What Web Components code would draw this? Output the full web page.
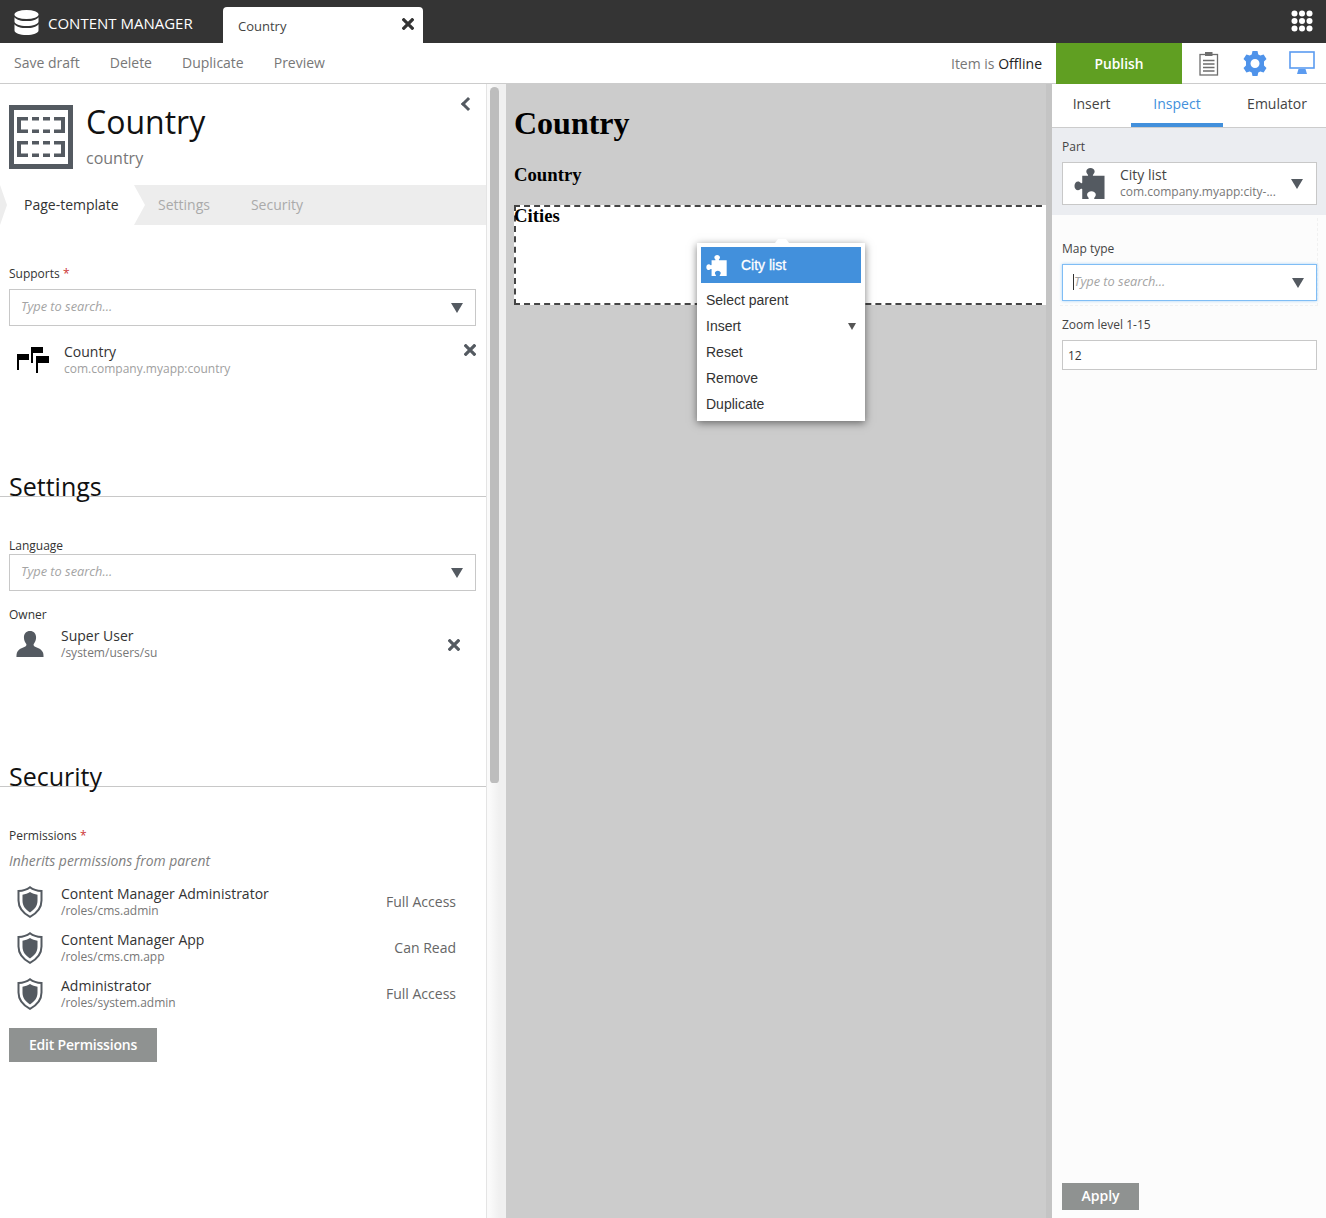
<!DOCTYPE html>
<html lang="en"><head><meta charset="utf-8"><title>Content Manager</title>
<style>
html,body{margin:0;padding:0;height:1218px;overflow:hidden;background:#fff;font-family:"Open Sans",sans-serif;}
</style></head><body>
<cm-app></cm-app>
<script>
const ICONS={
 db:'<svg width="25" height="25" viewBox="0 0 25 25"><ellipse cx="12.5" cy="4.5" rx="12" ry="4.5" fill="#fff"/><path d="M.5 7.2c2 3 7 3.8 12 3.8s10-.8 12-3.800v4.300c0 2.600-5.400 4.500-12 4.500S.5 14.100.5 11.500z" fill="#fff"/><path d="M.5 14.200c2 3 7 3.800 12 3.800s10-.8 12-3.800v6.300c0 2.600-5.400 4.500-12 4.500S.5 23.100.5 20.500z" fill="#fff"/></svg>',
 grid:'<svg width="22" height="22" viewBox="0 0 22 22" fill="#fff"><circle cx="3.500" cy="3.500" r="3"/><circle cx="11" cy="3.500" r="3"/><circle cx="18.500" cy="3.500" r="3"/><circle cx="3.500" cy="11" r="3"/><circle cx="11" cy="11" r="3"/><circle cx="18.500" cy="11" r="3"/><circle cx="3.500" cy="18.500" r="3"/><circle cx="11" cy="18.500" r="3"/><circle cx="18.500" cy="18.500" r="3"/></svg>',
 x:c=>`<svg width="12" height="12" viewBox="0 0 12 12" style="display:block"><path d="M1.800 1.800l8.400 8.400M10.200 1.800l-8.400 8.400" stroke="${c}" stroke-width="3.200" stroke-linecap="square" fill="none"/></svg>`,
 clip:'<svg width="20" height="25" viewBox="0 0 20 25" fill="none" stroke="#6e6e6e"><rect x="1" y="3.500" width="17.500" height="20.500" stroke-width="1.300"/><rect x="6" y="1" width="7.500" height="4" fill="#6e6e6e" stroke="none"/><path d="M4 9.500h11.500M4 13h11.500M4 16.500h11.500M4 20h11.500" stroke-width="1.300"/></svg>',
 gear:'<svg width="24" height="25" viewBox="0 0 24 25"><path fill="#4f93ea" fill-rule="evenodd" d="M9.500 0h5l.8 3.400 2 1.100 3.300-1L23.500 8l-2.500 2.400v4.200l2.500 2.400-2.900 4.500-3.300-1-2 1.100-.8 3.400h-5l-.8-3.400-2-1.100-3.300 1L.5 17 3 14.600v-4.200L.5 8l2.900-4.500 3.300 1 2-1.100zM12 8a4.500 4.500 0 1 0 0 9 4.500 4.500 0 0 0 0-9z"/></svg>',
 mon:'<svg width="26" height="24" viewBox="0 0 26 24"><rect x="1" y="1" width="24" height="16" fill="none" stroke="#5b9bf0" stroke-width="1.600"/><path d="M9.500 18h7l1.500 5H8z" fill="#5b9bf0"/></svg>',
 page:'<svg width="64" height="64" viewBox="0 0 64 64" fill="#545a61"><path fill-rule="evenodd" d="M0 0h64v64H0zM5 5v54h54V5z"/><path d="M8 12h11v3.500h-7v9h7V28H8zM23 12h7v3.500h-7zM34 12h7v3.500h-7zM45 12h11v16H45v-3.500h7v-9h-7zM23 24.500h7V28h-7zM34 24.500h7V28h-7zM8 36h11v3.500h-7v9h7V52H8zM23 36h7v3.500h-7zM34 36h7v3.500h-7zM45 36h11v16H45v-3.500h7v-9h-7zM23 48.500h7V52h-7zM34 48.500h7V52h-7z"/></svg>',
 flags:'<svg width="32" height="26" viewBox="0 0 32 26" fill="#000"><rect x="0" y="7" width="2" height="16"/><rect x="0" y="7" width="12" height="6"/><rect x="14" y="0" width="2" height="16"/><rect x="14" y="0" width="12" height="6"/><rect x="19" y="9" width="2" height="17"/><rect x="19" y="9" width="13" height="7"/></svg>',
 user:'<svg width="28" height="26" viewBox="0 0 30 30" preserveAspectRatio="none" fill="#545a61"><path d="M15 0c4 0 6.500 3 6.500 7.500 0 3-1 5.500-2.500 7.500-.5 1 0 2.500 1.500 3.200 3 1.300 7 2.800 8.500 6.800.4 1.300.5 3.500.5 5H.5c0-1.500.1-3.700.5-5 1.500-4 5.500-5.500 8.500-6.800 1.500-.7 2-2.200 1.500-3.200-1.500-2-2.500-4.500-2.500-7.500C8.500 3 11 0 15 0z"/></svg>',
 shield:'<svg width="26" height="32" viewBox="0 0 26 32"><path d="M13 1.200c3 2.300 7 3.600 11.500 3.800v9.500c0 7.500-4.800 12.800-11.500 16.300C6.300 27.300 1.500 22 1.500 14.500V5C6 4.800 10 3.500 13 1.200z" fill="none" stroke="#545a61" stroke-width="2"/><path d="M13 6c2.300 1.500 4.800 2.400 7.500 2.700v6c0 5-3 8.800-7.500 11.700-4.500-2.900-7.500-6.700-7.500-11.700v-6C8.200 8.400 10.700 7.500 13 6z" fill="#545a61"/></svg>',
 puzzle:c=>`<svg width="31" height="31" viewBox="0 0 31 32" fill="${c}"><path d="M8 8h5.500c.6 0 .7-.6.300-1.100C12.800 5.800 12.200 5 12.200 3.700 12.200 1.500 14.200 0 16.500 0s4.300 1.500 4.300 3.700c0 1.300-.6 2.100-1.600 3.200-.4.500-.3 1.100.3 1.100H31v24H21c-.7 0-.9-.7-.5-1.300.8-1.100 1.500-1.900 1.500-3.100 0-2-2.200-3.600-4.500-3.600S13 25.600 13 27.600c0 1.200.7 2 1.500 3.100.4.600.2 1.300-.5 1.300H8V22c0-.7-.7-.9-1.300-.5-1 .8-1.800 1.500-3 1.500C1.600 23 0 21 0 18.500S1.600 14 3.700 14c1.200 0 2 .7 3 1.500.6.400 1.300.2 1.300-.5z"/></svg>`
};
function def(name,css,html,init){
 customElements.define(name,class extends HTMLElement{
  constructor(){super();const s=this.attachShadow({mode:'open'});s.innerHTML='<style>'+css+'</style>'+(typeof html==='function'?html(this):html);}
  connectedCallback(){if(this._d)return;this._d=1;if(init)init(this);}
 });
}
def('top-bar',`:host{display:flex;height:43px;background:#343434;align-items:stretch;color:#fff}
.logo{display:flex;align-items:center;padding-left:14px;width:223px;box-sizing:border-box;gap:9px;font-size:15px}
.logo svg{display:block;margin-top:1px}.logo span{padding-top:3px}
.tab{width:200px;margin-top:7px;background:#fff;border-radius:4px 4px 0 0;color:#444;font-size:13px;display:flex;align-items:center;justify-content:space-between;padding:0 9px 0 15px;box-sizing:border-box}
.tab span{padding-top:1px}.tab svg{margin-bottom:3px}
.grid{margin-left:auto;padding:10px 13px 0 0}`,
`<div class="logo">${ICONS.db}<span>CONTENT MANAGER</span></div><div class="tab"><span>Country</span>${ICONS.x('#333')}</div><div class="grid">${ICONS.grid}</div>`);

def('tool-bar',`:host{display:flex;height:41px;box-sizing:border-box;border-bottom:1px solid #ccc;align-items:stretch;font-size:14px;color:#777}
.l{display:flex;gap:30px;padding-left:14px;align-items:center;padding-bottom:2px}
.st{margin-left:auto;align-self:center;padding-right:14px;padding-top:1px;color:#777}.st b{font-weight:400;color:#222}
.pub{width:126px;background:#609f22;color:#fff;font-weight:600;font-size:13.800px;display:flex;align-items:center;justify-content:center;height:41px}
.ic{display:flex;align-items:center;width:144px;box-sizing:border-box;padding-left:17px}
.ic svg{display:block}.ic svg:nth-child(2){margin-left:24px}.ic svg:nth-child(3){margin-left:22px}`,
`<div class="l"><span>Save draft</span><span>Delete</span><span>Duplicate</span><span>Preview</span></div><div class="st">Item is <b>Offline</b></div><div class="pub">Publish</div><div class="ic">${ICONS.clip}${ICONS.gear}${ICONS.mon}</div>`);

def('search-box',`:host{display:flex;align-items:center;box-sizing:border-box;height:37px;border:1px solid #c8c8c8;background:#fff;padding:0 12px 0 11px;justify-content:space-between}
:host([focus]){border-color:#7fbdf5;box-shadow:0 0 3px #a8d3f8;padding-left:10px}
.p{font-style:italic;color:#a4a4a4;font-size:12.800px;padding-bottom:4px}
.c{display:none;width:1px;height:16px;background:#333;margin-bottom:2px}
:host([focus]) .c{display:block}.w{display:flex;align-items:center}
.t{width:0;height:0;border-left:6px solid transparent;border-right:6px solid transparent;border-top:10px solid #545a61}`,
`<div class="w"><i class="c"></i><span class="p">Type to search...</span></div><i class="t"></i>`);

def('field-label',`:host{display:block;font-size:12px;line-height:16px;color:#333}.r{color:#c33}`,
 h=>`<slot></slot>${h.hasAttribute('req')?' <span class="r">*</span>':''}`);

def('section-head',`:host{display:block;height:27px;line-height:34px;font-size:25px;color:#111;border-bottom:1px solid #c8c8c8;padding-left:9px}`,`<slot></slot>`);

def('entity-row',`:host{display:flex;height:46px;align-items:center;position:relative}
.i{width:var(--iw,61px);display:flex;padding-left:var(--ip,17px);box-sizing:border-box;flex:none}
.t{flex:1;min-width:0}
.n{font-size:14px;line-height:17px;color:#333}.p{font-size:12px;line-height:16px;color:#777;margin-top:1px}
:host([soft]) .p{color:#a0a0a0}
.a{font-size:14px;color:#666;padding:0 20px 2px 0}`,
h=>`<div class="i"><slot name="icon"></slot></div><div class="t"><div class="n">${h.getAttribute('name')}</div><div class="p">${h.getAttribute('path')}</div></div>${h.getAttribute('access')?`<div class="a">${h.getAttribute('access')}</div>`:''}<slot name="act"></slot>`);

def('step-bar',`:host{display:flex;height:40px;background:#ededed;font-size:14px;color:#aaa;align-items:center;position:relative}
.on{position:relative;height:40px;width:145px;background:#fff;clip-path:polygon(0 0,134px 0,145px 50%,134px 100%,0 100%,7px 50%);color:#333;display:flex;align-items:center;padding:0 0 2px 24px;box-sizing:border-box;flex:none}
.s{margin-left:13px;padding-bottom:2px}.s+.s{margin-left:41px}`,
`<div class="on">Page-template</div><span class="s">Settings</span><span class="s">Security</span>`);

def('wizard-panel',`:host{display:block;width:487px;flex:none;box-sizing:border-box;border-right:1px solid #e4e4e4;height:1134px;overflow:hidden;position:relative}
.hd{display:flex;padding:21px 0 16px 9px;height:64px;position:relative}
.hd svg{display:block}.tt{margin-left:13px}
.h1{font-size:32px;line-height:38px;color:#111;margin-top:-2px}.h2{font-size:16px;line-height:22px;color:#777;margin-top:6px}
.col{position:absolute;right:13px;top:15px}
.col i{display:block;width:7px;height:7px;border-left:3px solid #545a61;border-bottom:3px solid #545a61;transform:rotate(45deg)}
.f{padding:0 10px 0 9px}
.sup{padding-top:41px;height:244px;box-sizing:border-box}
.sup search-box{margin-top:7px}
.sup entity-row{margin:11px 0 0 -9px;--iw:64px}
.rm{position:absolute;right:0;top:7px}.rm2{position:absolute;right:16px;top:14px}
.set{height:262px;box-sizing:border-box;padding-top:41px}
.own{margin-top:16px}
.own field-label{margin-bottom:2px}
.own entity-row{margin:0 0 0 -9px;height:38px;--ip:16px}
.sec{padding-top:41px}
.inh{font-size:13.900px;font-style:italic;color:#808080;margin:8px 0 9px;line-height:18px}
.sec entity-row{margin-left:-9px}
.btn{display:inline-block;margin-top:11px;background:#8f9291;color:#fff;font-size:14px;font-weight:600;line-height:34px;width:148px;text-align:center;letter-spacing:-.2px}
.rows{margin-top:1px}`,
`<div class="hd">${ICONS.page}<div class="tt"><div class="h1">Country</div><div class="h2">country</div></div><div class="col"><i></i></div></div>
<step-bar></step-bar>
<div class="f sup"><field-label req>Supports</field-label><search-box></search-box>
 <entity-row soft id="c" name="Country" path="com.company.myapp:country"><span slot="act" class="rm">${ICONS.x('#545a61')}</span></entity-row></div>
<section-head>Settings</section-head>
<div class="f set"><field-label>Language</field-label><search-box></search-box>
 <div class="own"><field-label>Owner</field-label><entity-row id="u" name="Super User" path="/system/users/su"><span slot="act" class="rm2">${ICONS.x('#545a61')}</span></entity-row></div></div>
<section-head>Security</section-head>
<div class="f sec"><field-label req>Permissions</field-label><div class="inh">Inherits permissions from parent</div>
 <div class="rows"><entity-row name="Content Manager Administrator" path="/roles/cms.admin" access="Full Access"></entity-row>
 <entity-row name="Content Manager App" path="/roles/cms.cm.app" access="Can Read"></entity-row>
 <entity-row name="Administrator" path="/roles/system.admin" access="Full Access"></entity-row></div>
 <div class="btn">Edit Permissions</div></div>`,
h=>{const s=h.shadowRoot;
 const put=(r,ic)=>{const sp=document.createElement('span');sp.slot='icon';sp.style.display='flex';sp.innerHTML=ic;r.appendChild(sp);};
 put(s.getElementById('c'),ICONS.flags);put(s.getElementById('u'),ICONS.user);
 s.querySelectorAll('.rows entity-row').forEach(r=>put(r,ICONS.shield));
});

def('scroll-rail',`:host{display:block;width:19px;flex:none;background:linear-gradient(90deg,#fafafa 0 3px,#f0f0f0 12px);box-sizing:border-box;padding:3px 7px 0 3px}
i{display:block;height:696px;width:9px;background:#bdbdbd;border-radius:5px 5px 4px 4px}`,`<i></i>`);

def('context-menu',`:host{display:block;position:absolute;left:191px;top:159px;width:168px;height:178px;background:#fff;box-shadow:0 2px 8px rgba(0,0,0,.5);font-family:"Liberation Sans",Arial,sans-serif;font-size:14px;color:#333;box-sizing:border-box;padding:4px}
.ar{position:absolute;left:78px;top:-4px;width:14px;height:4px;background:#fff;clip-path:polygon(3px 0,11px 0,14px 100%,0 100%)}
.h{height:36px;background:#4290dc;color:#fff;display:flex;align-items:center;font-weight:400;-webkit-text-stroke:.3px #fff}
.h svg{margin:0 14px 0 5px;display:block}
.it{height:26px;line-height:26px;padding-left:5px;position:relative}
.l{margin-top:4px}
.t{position:absolute;right:5px;top:10px;width:0;height:0;border-left:4px solid transparent;border-right:4px solid transparent;border-top:7px solid #555}`,
`<div class="ar"></div><div class="h">${ICONS.puzzle('#fff').replace('width="31" height="31"','width="21" height="21"')}City list</div><div class="l"><div class="it">Select parent</div><div class="it">Insert<i class="t"></i></div><div class="it">Reset</div><div class="it">Remove</div><div class="it">Duplicate</div></div>`);

def('live-canvas',`:host{display:block;flex:1;min-width:0;height:1134px;background:#ccc;position:relative;overflow:hidden;padding:8px;box-sizing:border-box;font-family:"Liberation Serif","Times New Roman",serif;color:#000}
h1{font-size:32px;line-height:37px;margin:13px 0 0;font-weight:700}
h3{font-size:18.720px;line-height:22px;margin:0;font-weight:700}
.c1{margin-top:22px}
.reg{margin:19px -14px 0 0;height:100px;box-sizing:border-box;border:2px dashed #444;background:#fff}
.reg h3{margin:-2px 0 0 -2px}`,
`<h1>Country</h1><h3 class="c1">Country</h3><div class="reg"><h3>Cities</h3></div><context-menu></context-menu>`);

def('inspect-panel',`:host{display:flex;flex-direction:column;width:280px;flex:none;height:1134px;box-sizing:border-box;border-left:6px solid #c4c4c4;background:#fcfcfc;color:#444;position:relative}
.tabs{display:flex;height:44px;box-sizing:border-box;border-bottom:1px solid #ccc;background:#fff;font-size:14px;color:#444}
.tabs span{display:flex;align-items:center;justify-content:center;height:43px;box-sizing:border-box;padding-bottom:5px}
.tabs .a{color:#4290dc;border-bottom:4px solid #4290dc;padding-bottom:0}
.tabs .e{padding-left:5px}
.part{background:#ebedf1;height:87px;padding:11px 9px 0 10px;box-sizing:border-box}
.lb{font-size:12px;line-height:16px;color:#444}
.cb{height:43px;margin-top:7px;border:1px solid #c8c8c8;background:#fff;box-sizing:border-box;display:flex;align-items:center;padding-left:11px}
.cb svg{display:block;flex:none}.cb .tx{margin-left:15px;flex:1;padding-bottom:1px}
.n{font-size:14px;line-height:16px;color:#444;margin-bottom:1px}.p{font-size:12px;line-height:16px;color:#777}
.t{width:0;height:0;border-left:6px solid transparent;border-right:6px solid transparent;border-top:10px solid #545a61;margin-right:13px}
.body{padding:3px 9px 0 10px;flex:1;display:flex;flex-direction:column}
.dash{margin:0 -1px 0 -2px;padding:23px 0 4px 2px;border:1px dashed #f1f1f1;border-width:0 1px 1px 0}
search-box{margin-top:7px}
.z{margin-top:11px}
.inp{height:30px;margin-top:7px;box-sizing:border-box;border:1px solid #c8c8c8;background:#fff;font-size:12px;line-height:30px;padding-left:5px;color:#333}
.ap{margin-top:auto;margin-bottom:8px;width:77px;height:27px;background:#8f9291;color:#fff;font-weight:600;font-size:14px;line-height:25px;text-align:center}`,
`<div class="tabs"><span style="width:79px">Insert</span><span class="a" style="width:92px">Inspect</span><span class="e" style="width:103px">Emulator</span></div>
<div class="part"><div class="lb">Part</div><div class="cb">${ICONS.puzzle('#545a61')}<div class="tx"><div class="n">City list</div><div class="p">com.company.myapp:city-...</div></div><i class="t"></i></div></div>
<div class="body"><div class="dash"><div class="lb">Map type</div><search-box focus></search-box></div>
<div class="lb z">Zoom level 1-15</div><div class="inp">12</div><div class="ap">Apply</div></div>`);

def('cm-app',`:host{display:block;width:1326px;height:1218px;overflow:hidden}
.m{display:flex;height:1134px}`,
`<top-bar></top-bar><tool-bar></tool-bar><div class="m"><wizard-panel></wizard-panel><scroll-rail></scroll-rail><live-canvas></live-canvas><inspect-panel></inspect-panel></div>`);
</script>
</body></html>
